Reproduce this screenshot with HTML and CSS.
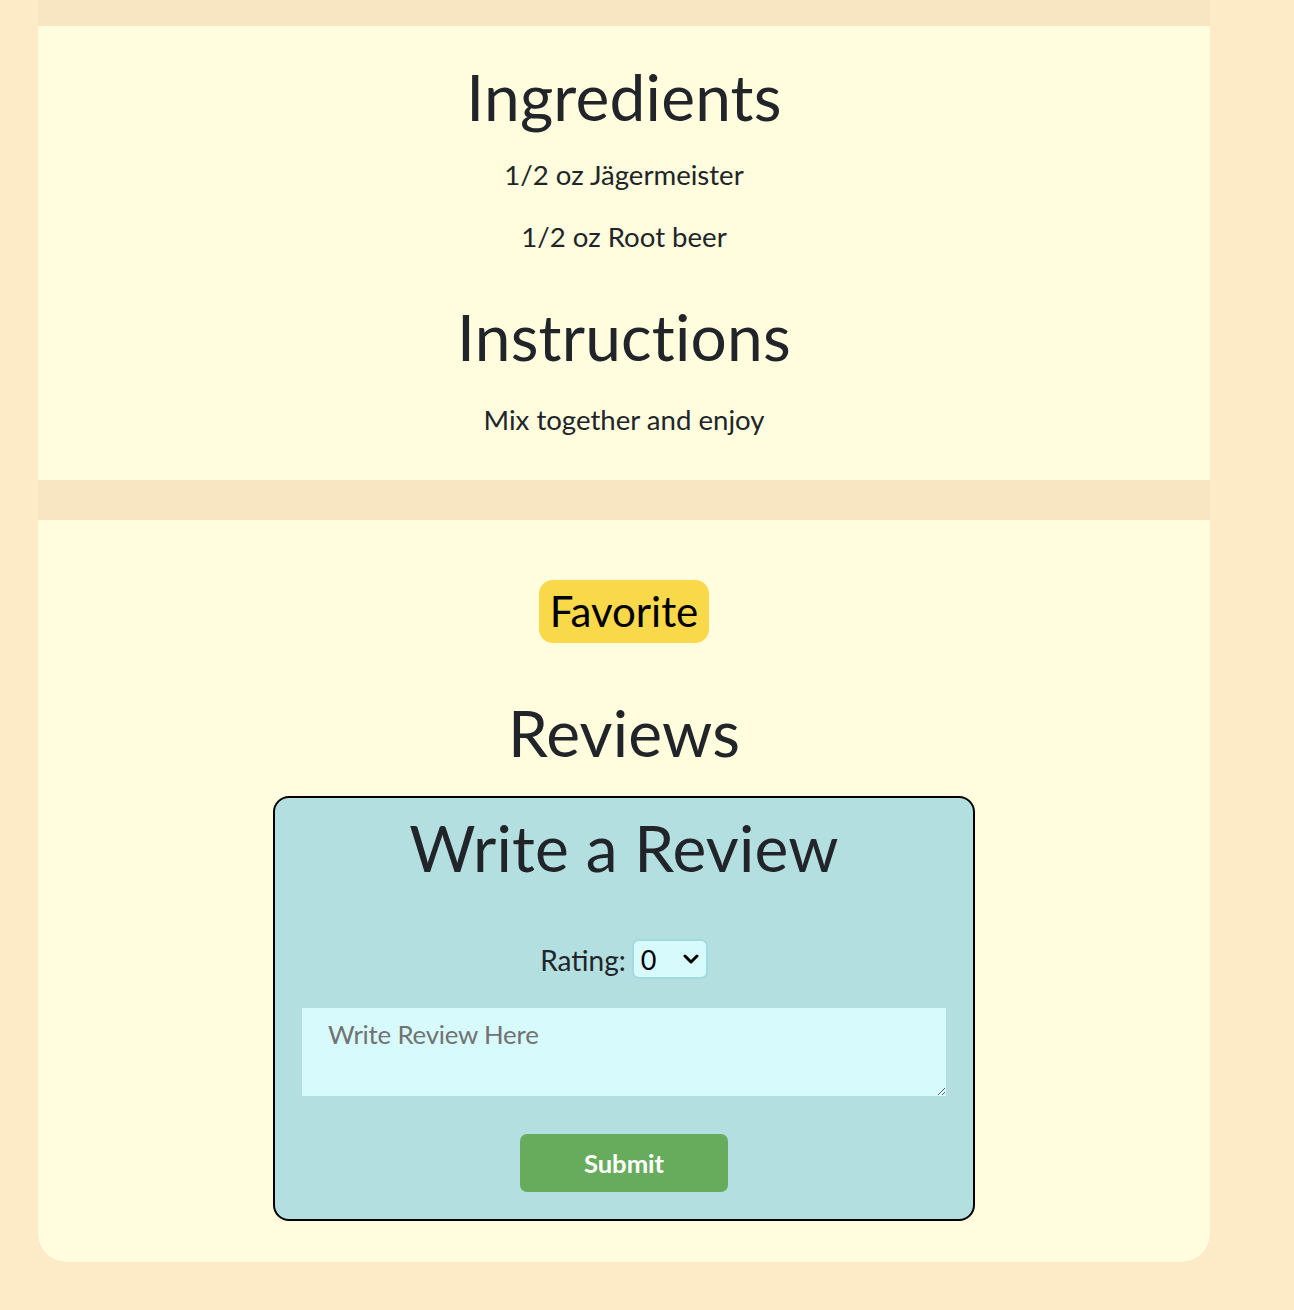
FILE: index.html
```html
<!DOCTYPE html>
<html lang="en">
<head>
<meta charset="utf-8">
<title>Recipe</title>
<link rel="stylesheet" href="styles.css">
</head>
<body>
<main class="page">
  <section class="card card-recipe">
    <h2 class="title t-ingredients">Ingredients</h2>
    <p class="line l-first">1/2 oz Jägermeister</p>
    <p class="line l-second">1/2 oz Root beer</p>
    <h2 class="title t-instructions">Instructions</h2>
    <p class="line l-mix">Mix together and enjoy</p>
  </section>
  <section class="card card-reviews">
    <button class="fav-btn" type="button">Favorite</button>
    <h2 class="title t-reviews">Reviews</h2>
    <form class="review-box">
      <h2 class="title t-write">Write a Review</h2>
      <div class="rating-row">
        <label class="rating-label" for="rating">Rating:</label>
        <span class="select-wrap">
          <select id="rating" class="rating-select">
            <option>0</option><option>1</option><option>2</option><option>3</option><option>4</option><option>5</option>
          </select>
          <svg class="chev" width="16" height="12" viewBox="0 0 16 12" aria-hidden="true"><path d="M2 3 L8 9 L14 3" fill="none" stroke="#000" stroke-width="3" stroke-linecap="round" stroke-linejoin="round"/></svg>
        </span>
      </div>
      <textarea class="review-text" placeholder="Write Review Here"></textarea>
      <button class="submit-btn" type="button">Submit</button>
    </form>
  </section>
</main>
</body>
</html>
```

FILE: styles.css
```css
html, body {
  margin: 0;
  padding: 0;
}
body {
  background: #fcebc6;
  font-family: Lato, "Liberation Sans", sans-serif;
  color: #212529;
  height: 1310px;
  overflow: hidden;
}
.page {
  margin-left: 38px;
  width: 1172px;
  background: #f7e6c1;
  padding-top: 26px;
  display: flex;
  flex-direction: column;
  gap: 40px;
  border-radius: 0 0 28px 28px;
  overflow: hidden;
}
.card {
  background: #fffdde;
  display: flex;
  flex-direction: column;
  align-items: center;
  text-align: center;
}
.card-recipe {
  padding: 32px 0 42px;
}
.card-reviews {
  padding: 60px 0 41px;
  border-radius: 0 0 28px 28px;
}
.title {
  font-family: Lato, "Liberation Sans", sans-serif;
  font-weight: 400;
  font-size: 64px;
  line-height: 77px;
  margin: 0;
  letter-spacing: 0.2px;
}
.line {
  font-size: 27.6px;
  line-height: 36px;
  margin: 0;
}
.l-first { margin-top: 22px; }
.l-second { margin-top: 26px; }
.t-instructions { margin-top: 43px; }
.l-mix { margin-top: 27px; }

.fav-btn {
  background: #f9d84a;
  border: none;
  border-radius: 14px;
  font-family: Lato, "Liberation Sans", sans-serif;
  font-size: 42px;
  line-height: 48px;
  padding: 7px 0 8px;
  color: #000;
  height: 63px;
  width: 170px;
}
.t-reviews { margin-top: 51px; }

.review-box {
  margin-top: 25px;
  width: 698px;
  box-sizing: content-box;
  border: 2px solid #000;
  border-radius: 16px;
  background: #b4dfe0;
  padding: 11px 0 27px;
  display: flex;
  flex-direction: column;
  align-items: center;
}
.rating-row {
  margin-top: 53px;
  height: 40px;
  display: flex;
  align-items: center;
  gap: 6px;
  font-size: 28px;
}
.rating-label {
  padding-top: 2px;
}
.select-wrap {
  position: relative;
  display: inline-block;
  height: 40px;
}
.rating-select {
  appearance: none;
  -webkit-appearance: none;
  width: 76px;
  height: 40px;
  box-sizing: border-box;
  background: #d7fafc;
  border: 2px solid #a3dbe0;
  border-radius: 7px;
  font-family: Lato, "Liberation Sans", sans-serif;
  font-size: 27px;
  color: #000;
  padding: 0 0 0 7px;
  margin: 0;
}
.chev {
  position: absolute;
  right: 9px;
  top: 14px;
  pointer-events: none;
}
.review-text {
  margin-top: 29px;
  width: 644px;
  height: 88px;
  box-sizing: border-box;
  background: #d7fafd;
  border: none;
  padding: 8px 26px;
  font-family: Lato, "Liberation Sans", sans-serif;
  font-size: 25.8px;
  line-height: 36px;
  letter-spacing: -0.2px;
  color: #212529;
  resize: vertical;
}
.review-text::placeholder {
  color: #727272;
}
.submit-btn {
  margin-top: 38px;
  width: 208px;
  height: 58px;
  background: #67ac5d;
  border: none;
  border-radius: 7px;
  color: #fff;
  font-family: Lato, "Liberation Sans", sans-serif;
  font-weight: 700;
  font-size: 25.6px;
  padding: 0;
}
```
